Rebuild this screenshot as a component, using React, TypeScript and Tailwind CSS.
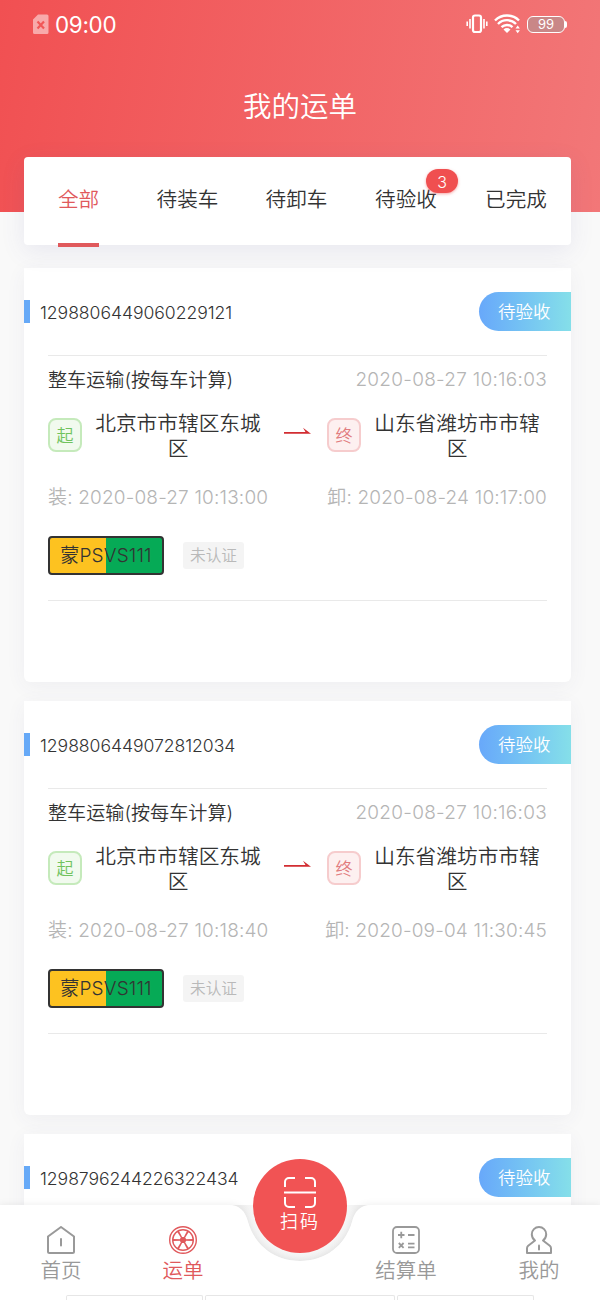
import React from 'react';

type Waybill = {
  id: string;
  detail?: {
    createdAt: string;
    loadAt: string;
    unloadAt: string;
  };
};

const waybills: Waybill[] = [
  {
    id: '1298806449060229121',
    detail: { createdAt: '2020-08-27 10:16:03', loadAt: '2020-08-27 10:13:00', unloadAt: '2020-08-24 10:17:00' },
  },
  {
    id: '1298806449072812034',
    detail: { createdAt: '2020-08-27 10:16:03', loadAt: '2020-08-27 10:18:40', unloadAt: '2020-09-04 11:30:45' },
  },
  { id: '1298796244226322434' },
];

const tabs = [
  { label: '全部', active: true },
  { label: '待装车' },
  { label: '待卸车' },
  { label: '待验收', count: 3 },
  { label: '已完成' },
];

const StatusBar = () => (
  <div className="flex h-[48px] items-center justify-between px-[33px]">
    <div className="flex items-center gap-[6px]">
      <svg width="16" height="21" viewBox="0 0 16 21">
        <path d="M5 0.5H14a1.5 1.5 0 0 1 1.5 1.5v16.5a1.5 1.5 0 0 1-1.5 1.5H1.5A1.5 1.5 0 0 1 0 18.5V5.5z" fill="#fff" opacity="0.5" />
        <path d="M4.500 7.500l6.500 7M11 7.500l-6.500 7" stroke="#f15757" strokeWidth="2.2" />
      </svg>
      <span className="pt-[2px] text-[22.4px] leading-none font-normal tracking-[-0.3px] text-white">09:00</span>
    </div>
    <div className="flex items-center">
      <svg width="22" height="20" viewBox="0 0 22 20" fill="none" stroke="#fff">
        <rect x="7" y="1.5" width="8" height="16.5" rx="2" strokeWidth="2.2" />
        <path d="M4 5v9.500M18 5v9.500M1.200 7.500v4.500M20.800 7.500v4.500" strokeWidth="1.6" />
      </svg>
      <svg className="ml-[6px]" width="27" height="20" viewBox="0 0 27 20" fill="none" stroke="#fff" strokeWidth="2.4">
        <path d="M1 6.500a17 17 0 0 1 24 0M4 10a12.500 12.500 0 0 1 18 0M7.500 13.200a7.800 7.800 0 0 1 11 0" />
        <path d="M9.500 15.500a5 5 0 0 1 7 0L13 19z" fill="#fff" stroke="none" />
        <path d="M21.500 14.500l2.200-3 2.200 3zM21.500 16.200l2.200 3 2.200-3z" fill="#fff" stroke="none" />
      </svg>
      <div className="ml-[6px] flex h-[17px] w-[38px] items-center justify-center rounded-[6px] border-[1.5px] border-white bg-[#c98787] text-[13px] leading-none font-normal text-white">99</div>
      <div className="h-[7px] w-[2px] rounded-r bg-white" />
    </div>
  </div>
);

const Tabs = () => (
  <div className="relative z-10 mx-[24px] mt-[-55px] grid h-[88px] w-[547px] grid-cols-[109px_109px_109px_110px_110px] rounded-[4px] bg-white shadow-[0_6px_24px_rgba(80,80,160,0.1)]">
    {tabs.map((tab) => (
      <div key={tab.label} className="flex justify-center">
        <div className={`relative h-full text-[20.6px] leading-[86px] ${tab.active ? 'border-b-[4px] border-[#e0595c] text-[#e0595c]' : 'text-[#333]'}`}>
          {tab.label}
          {tab.count && (
            <span className="absolute left-[51px] top-[12px] flex h-[24px] w-[32px] items-center justify-center rounded-full bg-[#f04f50] pt-px text-[16px] text-white shadow-[0_1px_3px_rgba(240,80,80,0.5)]">
              {tab.count}
            </span>
          )}
        </div>
      </div>
    ))}
  </div>
);

const WaybillDetail = ({ createdAt, loadAt, unloadAt }: { createdAt: string; loadAt: string; unloadAt: string }) => (
  <div className="mx-[24px] mt-[24px] h-[246px] w-[499px] border-y border-[#e9e9e9]">
    <div className="mt-[10px] flex h-[28px] items-center justify-between">
      <span className="text-[19.1px] text-[#333]">整车运输(按每车计算)</span>
      <span className="text-[19px] tracking-[0.27px] text-[#b5b5b5]">{createdAt}</span>
    </div>
    <div className="mt-[17px] flex h-[52px] items-start">
      <div className="mt-[7px] flex size-[34px] items-center justify-center rounded-[8px] border-2 border-[#c5eabb] bg-[#f1faee] pt-[3px] text-[17px] text-[#70c35d]">起</div>
      <div className="ml-[12px] w-[168px] text-center text-[20.7px] leading-[25px] text-[#333]">北京市市辖区东城区</div>
      <svg className="ml-[21px] mt-[15px]" width="29" height="10" viewBox="0 0 29 10">
        <path d="M1 6H22.500L20 1.800L28 7.700H1z" fill="#d22d32" />
      </svg>
      <div className="ml-[15px] mt-[7px] flex size-[34px] items-center justify-center rounded-[8px] border-2 border-[#f6cccd] bg-[#fdf0f0] pt-[3px] text-[17px] text-[#e17b7e]">终</div>
      <div className="ml-[12px] w-[168px] text-center text-[20.7px] leading-[25px] text-[#333]">山东省潍坊市市辖区</div>
    </div>
    <div className="mt-[21px] flex h-[28px] items-center justify-between text-[19px] tracking-[0.17px] text-[#b5b5b5]">
      <span>装: {loadAt}</span>
      <span>卸: {unloadAt}</span>
    </div>
    <div className="mt-[24px] flex items-center">
      <div className="flex h-[39px] w-[116px] items-center justify-center rounded-[4px] border-2 border-[#333] bg-linear-to-r from-[#fdc220] from-50% to-[#06aa56] to-50% pt-px text-[19px] tracking-[0.15px] text-[#333]">蒙PSVS111</div>
      <div className="ml-[19px] flex h-[27px] w-[61px] items-center justify-center rounded-[3px] bg-[#f4f4f4] text-[15.7px] text-[#b9b9b9]">未认证</div>
    </div>
  </div>
);

const WaybillCard = ({ id, detail }: Waybill) => (
  <div className="h-[414px] w-[547px] shrink-0 rounded-b-[6px] bg-white pt-[24px] shadow-[0_4px_20px_rgba(60,70,120,0.06)]">
    <div className="flex h-[39px] items-center">
      <div className="h-[23px] w-[6px] bg-[#66a9f7]" />
      <div className="ml-[10px] flex-1 pt-[3px] text-[17.6px] tracking-[-0.05px] text-[#333]">{id}</div>
      <div className="flex h-[39px] w-[92px] items-center rounded-l-full bg-linear-to-r from-[#68a8fa] to-[#85dfe9] pl-[19px] pt-[2px] text-[17.5px] text-white">待验收</div>
    </div>
    {detail && <WaybillDetail {...detail} />}
  </div>
);

const HomeIcon = () => (
  <svg width="28" height="28" viewBox="0 0 28 28" fill="none" stroke="#999" strokeWidth="2" strokeLinejoin="round" strokeLinecap="round">
    <path d="M14 1L1 10.500V25.500a1.500 1.500 0 0 0 1.500 1.500h23a1.500 1.500 0 0 0 1.500-1.500V10.500z" />
    <path d="M14 13v6.500" />
  </svg>
);

const WheelIcon = () => (
  <svg width="28" height="28" viewBox="0 0 28 28" fill="none" stroke="#e0595c" strokeWidth="1.4">
    <circle cx="14" cy="14" r="13.3" />
    <circle cx="14" cy="14" r="10.3" />
    <circle cx="14" cy="14" r="2.4" fill="#e0595c" />
    {[0, 60, 120, 180, 240, 300].map((deg) => (
      <path key={deg} d="M16 13.300L24 13V15L16 14.700z" fill="#e0595c" stroke="none" transform={`rotate(${deg} 14 14)`} />
    ))}
  </svg>
);

const BillIcon = () => (
  <svg width="28" height="28" viewBox="0 0 28 28" fill="none" stroke="#999" strokeWidth="1.8">
    <rect x="1" y="1" width="26" height="26" rx="4" />
    <path d="M6 9h6.500M9.250 5.750v6.500M16 9h6.500M6.800 17l4.800 4.800M11.600 17l-4.800 4.800M16 17.600h6.500M16 21.300h6.500" />
  </svg>
);

const UserIcon = () => (
  <svg width="28" height="28" viewBox="0 0 28 28" fill="none" stroke="#999" strokeWidth="2" strokeLinejoin="round" strokeLinecap="round">
    <path d="M10 14.500C8 13 6.800 10.500 6.800 8.200a7.200 7.200 0 0 1 14.400 0c0 2.300-1.200 4.800-3.200 6.300L24.800 19.700q1.200 1 1.200 2.500V27H2V22.200q0-1.500 1.200-2.500z" />
    <path d="M14 19.500v4" />
  </svg>
);

const NavItem = ({ label, active, children }: { label: string; active?: boolean; children: React.ReactNode }) => (
  <div className={`flex w-[70px] flex-col items-center text-[20.5px] leading-[30px] ${active ? 'text-[#e0595c]' : 'text-[#999]'}`}>
    {children}
    <span className="mt-[2px]">{label}</span>
  </div>
);

const BottomNav = () => (
  <nav className="absolute inset-x-0 bottom-0 z-20 h-[100px]">
    {/* Bar background with the notch for the scan button */}
    <svg className="absolute left-0 top-0 overflow-visible" width="600" height="100" viewBox="0 0 600 100">
      <defs>
        <radialGradient id="notch" gradientUnits="userSpaceOnUse" cx="300" cy="5" r="58">
          <stop offset="0.8" stopColor="#f7f7f7" />
          <stop offset="1" stopColor="#efefef" />
        </radialGradient>
      </defs>
      <path d="M228 5H372C360 5 355 11 352 22C345 46 325 61 300 61C275 61 255 46 248 22C245 11 240 5 228 5z" fill="url(#notch)" />
      <path
        d="M0 5H228C240 5 245 11 248 22C255 46 275 61 300 61C325 61 345 46 352 22C355 11 360 5 372 5H600V100H0z"
        fill="#fff"
        className="drop-shadow-[0_-1px_3px_rgba(0,0,0,0.06)]"
      />
    </svg>
    <div className="relative flex pt-[26px]">
      <div className="ml-[26px]"><NavItem label="首页"><HomeIcon /></NavItem></div>
      <div className="ml-[52px]"><NavItem label="运单" active><WheelIcon /></NavItem></div>
      <div className="ml-[153px]"><NavItem label="结算单"><BillIcon /></NavItem></div>
      <div className="ml-[63px]"><NavItem label="我的"><UserIcon /></NavItem></div>
    </div>
    <div className="absolute left-[253px] top-[-41px] flex size-[94px] flex-col items-center rounded-full bg-[#f15354] pt-[18px] text-white">
      <svg width="32" height="32" viewBox="0 0 32 32" fill="none" stroke="#fff" strokeWidth="2">
        <path d="M1 10V5a4 4 0 0 1 4-4h6M21 1h6a4 4 0 0 1 4 4v5M1 20v6a4 4 0 0 0 4 4h6M21 30h6a4 4 0 0 0 4-4v-6M0 15.500h32" />
      </svg>
      <span className="text-[18px] leading-[26px] tracking-[2px]">扫码</span>
    </div>
    <div className="absolute bottom-0 left-[66px] flex h-[5px] w-[468px] gap-[2px]">
      <div className="w-[137px] rounded-t-[2px] border border-b-0 border-[#e6e6e6]" />
      <div className="w-[190px] rounded-t-[2px] border border-b-0 border-[#e6e6e6]" />
      <div className="w-[137px] rounded-t-[2px] border border-b-0 border-[#e6e6e6]" />
    </div>
  </nav>
);

export default function App() {
  return (
    <div className="relative h-[1300px] w-[600px] overflow-hidden bg-[#f9f9f9] font-['Inter','Noto_Sans_CJK_SC',sans-serif] font-[350]">
      <header className="h-[212px] bg-linear-[100deg] from-[#f15052] to-[#f27778]">
        <StatusBar />
        <h1 className="pt-[37px] text-center text-[28.5px] leading-[44px] text-white">我的运单</h1>
      </header>
      <Tabs />
      <main className="mx-[24px] mt-[23px] flex flex-col gap-[19px]">
        {waybills.map((bill) => (
          <WaybillCard key={bill.id} {...bill} />
        ))}
      </main>
      <BottomNav />
    </div>
  );
}
